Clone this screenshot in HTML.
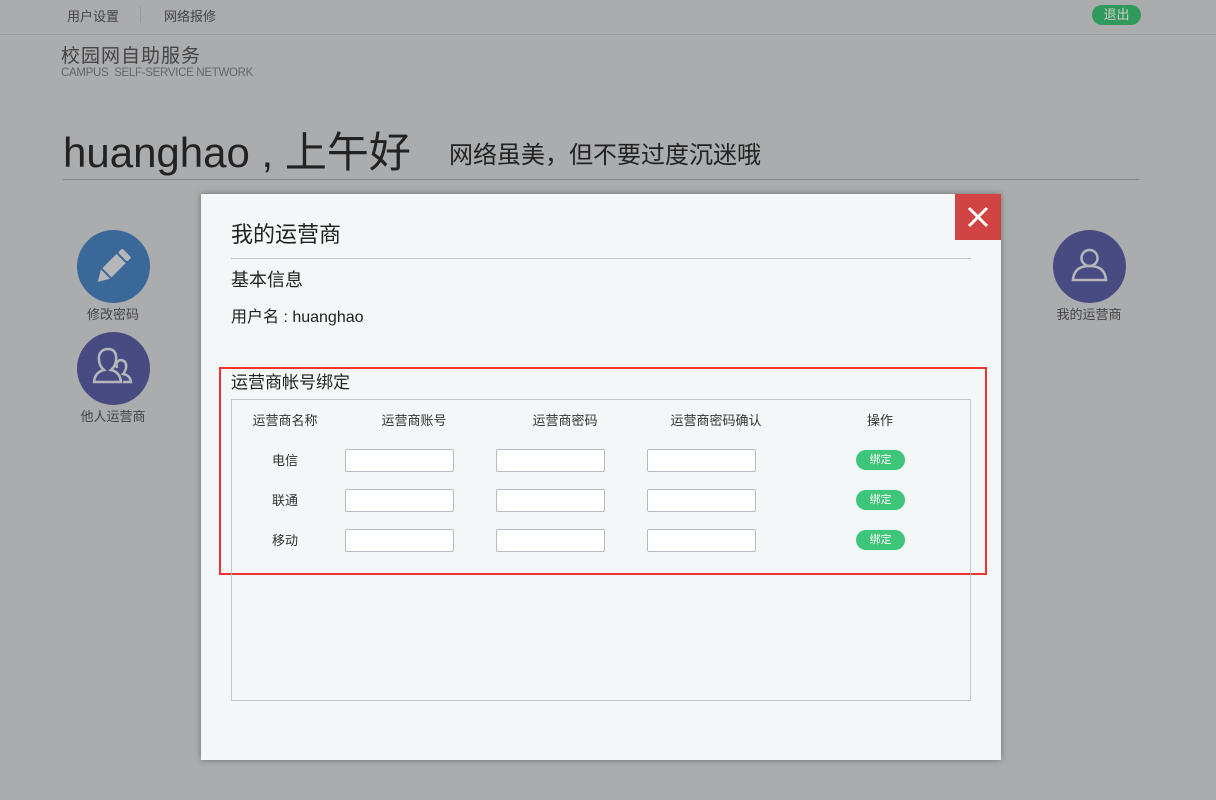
<!DOCTYPE html>
<html><head><meta charset="utf-8"><style>
*{margin:0;padding:0;box-sizing:border-box}
body{width:1216px;height:800px;background:#abacae;font-family:"Liberation Sans","Noto Sans CJK SC",sans-serif;position:relative;overflow:hidden;color:#333}
.a{position:absolute;white-space:nowrap}
.circ{position:absolute;width:73px;height:73px;border-radius:50%}
.lbl{position:absolute;font-size:13px;color:#444;width:120px;text-align:center}
.modal{position:absolute;left:201px;top:194px;width:800px;height:566px;background:#f4f7f8;box-shadow:0 0 6px rgba(0,0,0,.35)}
.inp{position:absolute;width:109px;height:23px;background:#fff;border:1px solid #b5bcc3;border-radius:2px}
.btn{position:absolute;width:49px;height:20px;border-radius:10px;background:#3dc67a;color:#fff;font-size:11px;text-align:center;line-height:20px}
.th{position:absolute;font-size:13px;color:#333;text-align:center;width:120px}
</style></head><body>
<div class="a" style="left:67px;top:6px;font-size:13px;color:#444">用户设置</div>
<div class="a" style="left:140px;top:7px;width:1px;height:16px;background:#999"></div>
<div class="a" style="left:164px;top:6px;font-size:13px;color:#444">网络报修</div>
<div class="a" style="left:1092px;top:5px;width:49px;height:20px;border-radius:10px;background:#2f9a5b;color:#ccc;font-size:13px;text-align:center;line-height:20px">退出</div>
<div class="a" style="left:0;top:34px;width:1216px;height:1px;background:#999"></div>
<div class="a" style="left:61px;top:41px;font-size:19px;color:#444;letter-spacing:1px">校园网自助服务</div>
<div class="a" style="left:61px;top:67px;font-size:11.5px;color:#666;letter-spacing:-0.3px">CAMPUS&nbsp; SELF-SERVICE NETWORK</div>
<div class="a" style="left:63px;top:119px;font-size:42px;color:#222">huanghao , 上午好</div>
<div class="a" style="left:449px;top:135px;font-size:24px;color:#222">网络虽美，但不要过度沉迷哦</div>
<div class="a" style="left:63px;top:179px;width:1076px;height:1px;background:#888"></div>

<div class="circ" style="left:77px;top:230px;background:#3a6898"><svg width="73" height="73" viewBox="0 0 73 73"><g transform="rotate(45 36 36)" fill="#b5b7bb"><rect x="30" y="17" width="13" height="6" rx="2"/><rect x="30" y="25" width="13" height="20"/><polygon points="30,47 43,47 36.5,58"/></g></svg></div>
<div class="lbl" style="left:53px;top:304px">修改密码</div>
<div class="circ" style="left:77px;top:332px;background:#484b82"><svg width="73" height="73" viewBox="0 0 73 73" fill="none" stroke="#b5b7bb" stroke-width="2.5"><path d="M17 50 Q18 40 27 38 Q21 33 22 24 Q24 17 31 17 Q38 17 39 24 Q40 33 34 38 Q43 40 44 50 Z"/><path d="M40 36 Q38 29 44 28 Q50 29 49 36 Q48 40 46 42 Q53 43 54 50 L46 50"/></svg></div>
<div class="lbl" style="left:53px;top:406px">他人运营商</div>
<div class="circ" style="left:1053px;top:230px;background:#484b82"><svg width="73" height="73" viewBox="0 0 73 73" fill="none" stroke="#b5b7bb" stroke-width="2.5"><circle cx="36.5" cy="28" r="8"/><path d="M20 50 Q21 36 36.5 36 Q52 36 53 50 Z"/></svg></div>
<div class="lbl" style="left:1029px;top:304px">我的运营商</div>

<div class="modal">
 <div class="a" style="right:0;top:0;width:46px;height:46px;background:#d04444"><svg width="46" height="46"><path d="M14 14L32 32M32 14L14 32" stroke="#fff" stroke-width="3"/></svg></div>
 <div class="a" style="left:30px;top:23px;font-size:22px;color:#222">我的运营商</div>
 <div class="a" style="left:30px;top:64px;width:740px;height:1px;background:#c4c6c8"></div>
 <div class="a" style="left:30px;top:72px;font-size:18px;color:#222">基本信息</div>
 <div class="a" style="left:30px;top:109px;font-size:16px;color:#222">用户名 : huanghao</div>
 <div class="a" style="left:18px;top:173px;width:768px;height:208px;border:2px solid #ee3333"></div>
 <div class="a" style="left:30px;top:174px;font-size:17px;color:#222">运营商帐号绑定</div>
 <div class="a" style="left:30px;top:205px;width:740px;height:302px;border:1px solid #c4c8cc"></div>
 <div class="th" style="left:24px;top:216px">运营商名称</div>
 <div class="th" style="left:153px;top:216px">运营商账号</div>
 <div class="th" style="left:304px;top:216px">运营商密码</div>
 <div class="th" style="left:455px;top:216px">运营商密码确认</div>
 <div class="th" style="left:619px;top:216px">操作</div>
 <div class="th" style="left:24px;top:256px">电信</div>
 <div class="th" style="left:24px;top:296px">联通</div>
 <div class="th" style="left:24px;top:336px">移动</div>
 <div class="inp" style="left:144px;top:255px"></div><div class="inp" style="left:295px;top:255px"></div><div class="inp" style="left:446px;top:255px"></div>
 <div class="inp" style="left:144px;top:295px"></div><div class="inp" style="left:295px;top:295px"></div><div class="inp" style="left:446px;top:295px"></div>
 <div class="inp" style="left:144px;top:335px"></div><div class="inp" style="left:295px;top:335px"></div><div class="inp" style="left:446px;top:335px"></div>
 <div class="btn" style="left:655px;top:256px">绑定</div>
 <div class="btn" style="left:655px;top:296px">绑定</div>
 <div class="btn" style="left:655px;top:336px">绑定</div>
</div>
</body></html>
